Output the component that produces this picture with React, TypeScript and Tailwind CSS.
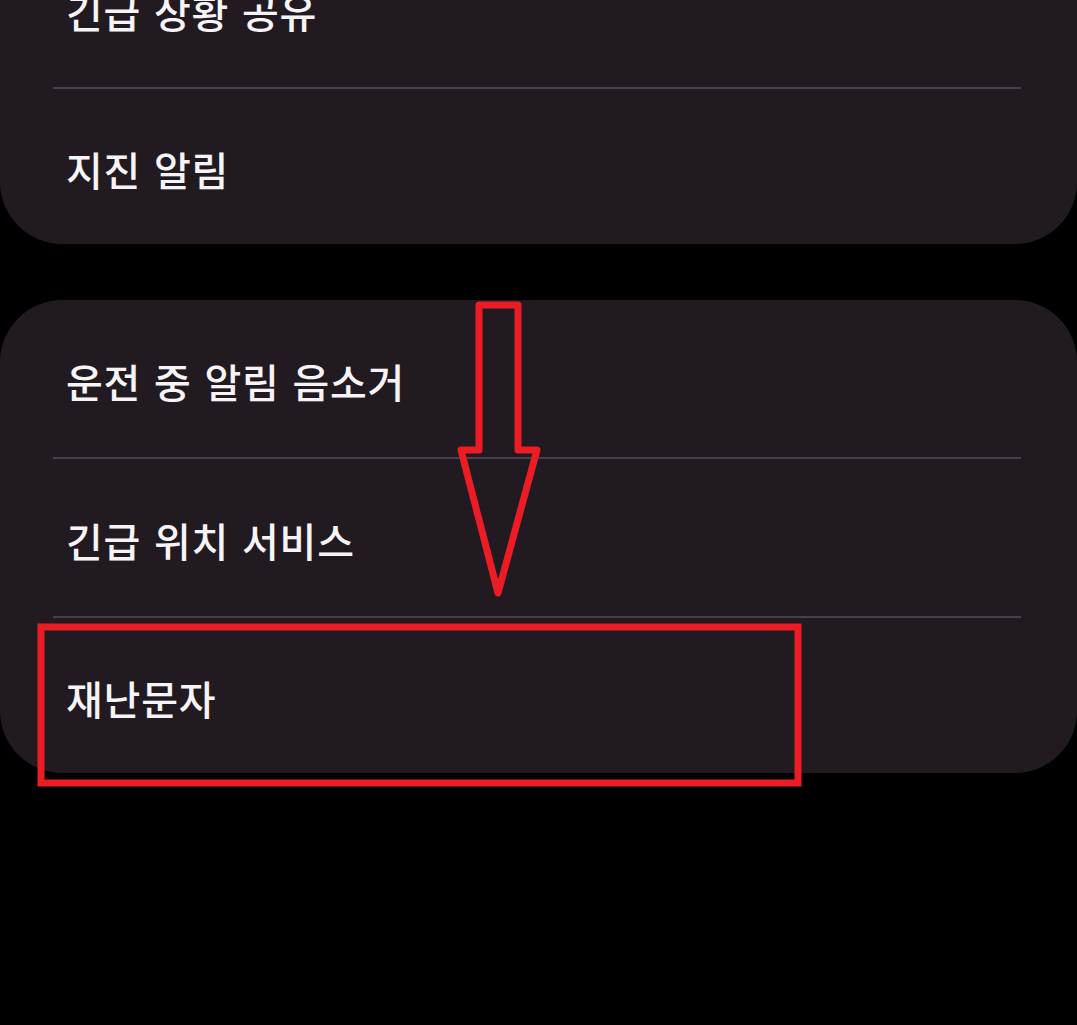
import React from "react";

const font = { fontFamily: '"Noto Sans CJK KR", "Noto Sans", sans-serif', wordSpacing: "3px" };

function Row({ label, last }: { label: string; last?: boolean }) {
  return (
    <div className={last ? "h-[155px] flex items-center pl-[66px] pt-1" : "h-[157px] flex items-center pl-[66px] pt-1"}>
      <span className="text-[40px] font-medium text-[#f6f4f6] leading-none tracking-[0.8px]">{label}</span>
    </div>
  );
}

function Divider() {
  return <div className="h-[2px] bg-[#47404a] ml-[53px] mr-[56px]" />;
}

export default function App() {
  return (
    <div className="relative w-[1077px] h-[1025px] bg-black overflow-hidden" style={font}>
      <div className="-mt-[70px] bg-[#211b21] rounded-b-[62px]">
        <Row label="긴급 상황 공유" />
        <Divider />
        <Row label="지진 알림" last />
      </div>
      <div className="mt-[56px] bg-[#211b21] rounded-[62px]">
        <Row label="운전 중 알림 음소거" />
        <Divider />
        <Row label="긴급 위치 서비스" />
        <Divider />
        <Row label="재난문자" last />
      </div>
      <svg className="absolute left-0 top-0 pointer-events-none" width="1077" height="1025" viewBox="0 0 1077 1025">
        <polygon
          points="479,305 518,305 518,450 537,450 498,593 461,450 479,450"
          fill="none"
          stroke="#ec1c24"
          strokeWidth="7"
          strokeLinejoin="round"
        />
        <rect x="41" y="627" width="757" height="156" fill="none" stroke="#ec1c24" strokeWidth="7" />
      </svg>
    </div>
  );
}
